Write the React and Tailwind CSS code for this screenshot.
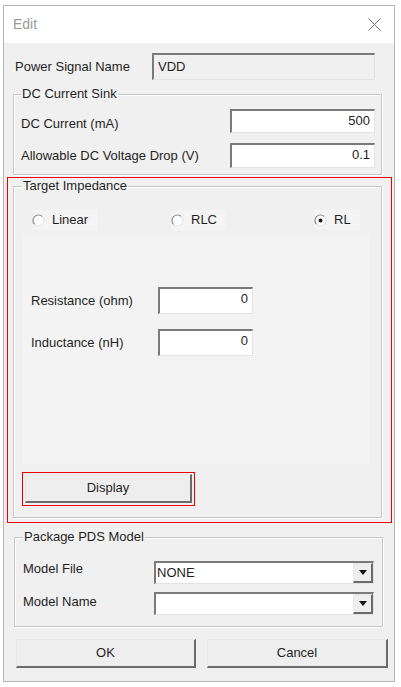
import React from 'react';

const sunken = 'border-t-2 border-l-2 border-r border-b border-t-[#7a7a7a] border-l-[#7a7a7a] border-r-[#e3e3e3] border-b-[#e3e3e3]';
const raised = 'border-t border-l border-r-2 border-b-2 border-t-[#e8e8e8] border-l-[#e8e8e8] border-r-[#6b6b6b] border-b-[#6b6b6b] bg-[#eeeeee]';
const group = 'min-w-0 border border-[#c6c6c6] shadow-[inset_1px_1px_0_#ffffff,1px_1px_0_#ffffff]';
const redBox = 'border border-[#ee0000]';

const Radio = ({ checked, label, className }) => (
    <div className={`flex h-[20px] ${className}`}>
        <div className="flex items-center bg-[#f4f4f4] pr-[9px]">
            <svg width="13" height="13" viewBox="0 0 13 13" className="shrink-0">
                <circle cx="6.5" cy="6.5" r="5.5" fill="#ffffff" />
                <path d="M10.4 2.6 A5.5 5.5 0 0 0 2.6 10.4" stroke="#8a8a8a" strokeWidth="1.2" fill="none" />
                <path d="M2.6 10.4 A5.5 5.5 0 0 0 10.4 2.6" stroke="#e6e6e6" strokeWidth="1.2" fill="none" />
                {checked ? <circle cx="6.5" cy="6.5" r="2" fill="#111111" /> : null}
            </svg>
            <span className="ml-[7px]">{label}</span>
        </div>
    </div>
);

const Field = ({ value, className }) => (
    <div className={`bg-white text-right pr-[4px] leading-[20px] ${sunken} ${className}`}>{value}</div>
);

const Combo = ({ value }) => (
    <div className={`flex w-[220px] bg-white ${sunken} h-[23px]`}>
        <div className="flex-1 pl-[1px] leading-[20px]">{value}</div>
        <div className={`w-[20px] flex items-center justify-center ${raised}`}>
            <svg width="8" height="5" viewBox="0 0 8 5">
                <path d="M0 0 H8 L4 5 Z" fill="#111111" />
            </svg>
        </div>
    </div>
);

const App = () => {
    return (
        <div className="w-[401px] h-[687px] bg-white pt-[5px] pl-[3px] font-['Liberation_Sans',Arial,sans-serif] text-[13px] text-[#1f1f1f]">
            <div className="w-[392px] h-[677px] border border-[#b5b5b5] flex flex-col">
                {/* barra de titulo */}
                <div className="h-[37px] bg-white flex items-center justify-between pl-[9px] pr-[13px]">
                    <span className="text-[14px] text-[#9a9a9a]">Edit</span>
                    <svg width="13" height="13" viewBox="0 0 13 13">
                        <path d="M0.5 0.5 L12.5 12.5 M12.5 0.5 L0.5 12.5" stroke="#6a6a6a" strokeWidth="1" />
                    </svg>
                </div>

                <div className="flex-1 bg-[#f0f0f0]">
                    {/* Power Signal Name */}
                    <div className="flex items-center mt-[10px] h-[27px]">
                        <span className="w-[148px] pl-[11px]">Power Signal Name</span>
                        <div className={`w-[223px] h-[27px] bg-[#f0f0f0] pl-[4px] leading-[23px] ${sunken}`}>VDD</div>
                    </div>

                    {/* DC Current Sink */}
                    <fieldset className={`ml-[9px] mt-[6px] w-[369px] pb-[6px] ${group}`}>
                        <legend className="ml-[7px] px-[1px] leading-[16px]">DC Current Sink</legend>
                        <div className="flex items-center mt-[7px] h-[24px]">
                            <span className="w-[216px] pl-[7px] mt-[6px]">DC Current (mA)</span>
                            <Field value="500" className="w-[145px] h-[24px]" />
                        </div>
                        <div className="flex items-center mt-[10px] h-[25px]">
                            <span className="w-[216px] pl-[7px]">Allowable DC Voltage Drop (V)</span>
                            <Field value="0.1" className="w-[145px] h-[25px]" />
                        </div>
                    </fieldset>

                    {/* Target Impedance, marcado en rojo */}
                    <div className={`ml-[3px] mt-[2px] w-[385px] h-[346px] ${redBox}`}>
                        <fieldset className={`ml-[5px] w-[369px] h-[340px] ${group}`}>
                            <legend className="ml-[8px] px-[1px] leading-[16px]">Target Impedance</legend>
                            <div className="flex mt-[16px] h-[20px] pl-[18px]">
                                <Radio label="Linear" className="w-[139px]" />
                                <Radio label="RLC" className="w-[143px]" />
                                <Radio label="RL" checked />
                            </div>
                            <div className="ml-[9px] mt-[5px] w-[346px] h-[229px] bg-[#f3f3f3] pl-[8px] pt-[52px]">
                                <div className="flex items-center h-[27px]">
                                    <span className="w-[127px]">Resistance (ohm)</span>
                                    <Field value="0" className="w-[95px] h-[27px]" />
                                </div>
                                <div className="flex items-center mt-[15px] h-[27px]">
                                    <span className="w-[127px]">Inductance (nH)</span>
                                    <Field value="0" className="w-[95px] h-[27px]" />
                                </div>
                            </div>
                            <div className={`ml-[8px] mt-[8px] w-[173px] h-[34px] p-[1px] ${redBox}`}>
                                <button className={`w-[167px] h-[29px] ml-[1px] ${raised}`}>Display</button>
                            </div>
                        </fieldset>
                    </div>

                    {/* Package PDS Model */}
                    <fieldset className={`ml-[10px] mt-[6px] w-[369px] pb-[11px] ${group}`}>
                        <legend className="ml-[8px] px-[1px] leading-[16px]">Package PDS Model</legend>
                        <div className="flex items-center mt-[16px] h-[23px]">
                            <span className="w-[139px] pl-[8px] -mt-[8px]">Model File</span>
                            <Combo value="NONE" />
                        </div>
                        <div className="flex items-center mt-[8px] h-[23px]">
                            <span className="w-[139px] pl-[8px] -mt-[4px]">Model Name</span>
                            <Combo value="" />
                        </div>
                    </fieldset>

                    {/* botones */}
                    <div className="flex mt-[12px] ml-[12px] gap-[11px]">
                        <button className={`w-[180px] h-[29px] ${raised}`}>OK</button>
                        <button className={`w-[181px] h-[29px] ${raised}`}>Cancel</button>
                    </div>
                </div>
            </div>
        </div>
    );
}

export default App;
